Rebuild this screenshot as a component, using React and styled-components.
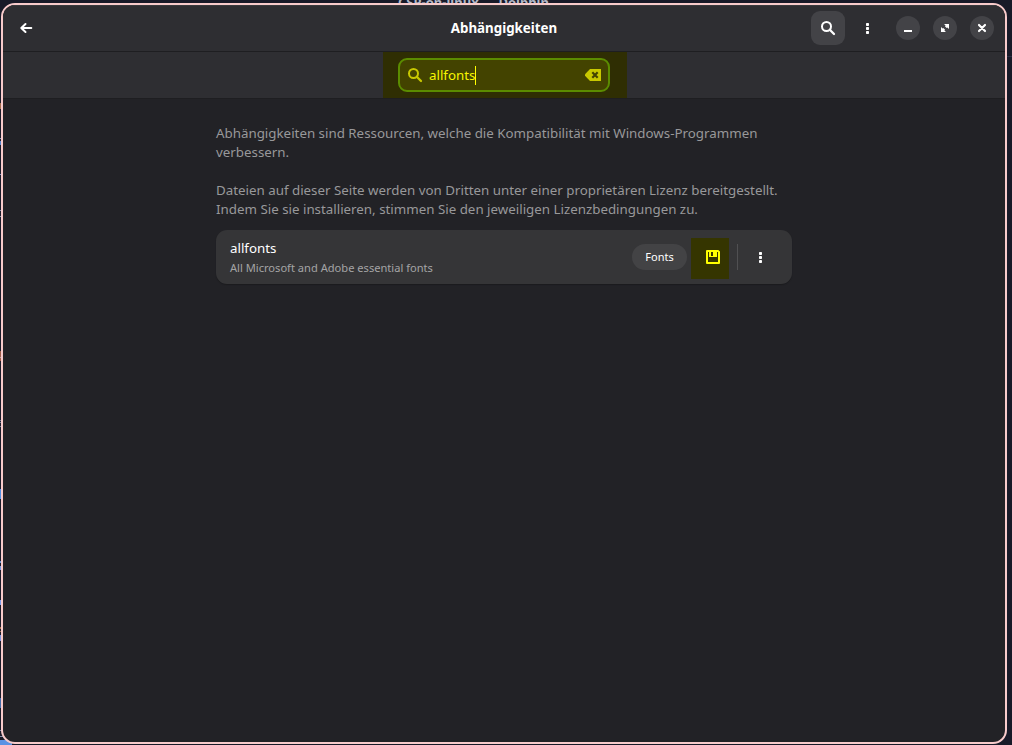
import React from "react";
import styled, { createGlobalStyle } from "styled-components";

const Global = createGlobalStyle`
  * { box-sizing: border-box; }
  body { margin: 0; background: #181a28; overflow: hidden; }
  button { border: 0; padding: 0; font: inherit; color: inherit; background: none; }
  svg { display: block; }
`;

const Desktop = styled.div`
  position: relative;
  width: 1012px;
  height: 745px;
  overflow: hidden;
  padding: 3px 5px 1px 1px;
  background: #181a28;
  font-family: "Noto Sans", sans-serif;
  font-size: 13.33px;
  color: #fff;
`;

/* The window behind: its title, left edge and toolbar line peek out. */
const BackTitle = styled.div`
  position: absolute;
  left: 398px;
  top: -7px;
  font-size: 13px;
  line-height: 18px;
  font-weight: 700;
  color: #b4b9c8;
  white-space: pre;
`;
const BackMark = styled.i`
  position: absolute;
  left: 0;
  top: ${(p) => p.$y}px;
  width: ${(p) => p.$w || 3}px;
  height: ${(p) => p.$h}px;
  background: ${(p) => p.$c};
`;
const BackLine = styled.i`
  position: absolute;
  right: 0;
  top: 56px;
  width: 8px;
  height: 1px;
  background: #2b2e44;
`;

const Window = styled.main`
  position: relative;
  height: 741px;
  border: 2px solid #f8cbcb;
  border-radius: 14px;
  background: #222226;
  overflow: hidden;
`;

const HeaderBar = styled.header`
  display: grid;
  grid-template-columns: 1fr auto 1fr;
  align-items: center;
  height: 47px;
  padding: 0 11px 2px;
  background: #2e2e32;
  border-top: 1px solid #3a3a3e;
  border-bottom: 1px solid #1e1e21;
`;
const Title = styled.h1`
  margin: 0;
  font-size: 13.33px;
  line-height: 18px;
  font-weight: 700;
`;
const Controls = styled.div`
  display: flex;
  align-items: center;
  justify-content: flex-end;
`;
const ToolButton = styled.button`
  display: grid;
  place-items: center;
  width: 34px;
  height: 34px;
  border-radius: 9px;
  background: ${(p) => (p.$active ? "#434347" : "transparent")};
`;
const BackButton = styled(ToolButton)`
  margin-left: -5px;
`;
const MenuButton = styled(ToolButton)`
  margin: 0 12px 0 5px;
`;
const WindowButton = styled.button`
  display: grid;
  place-items: center;
  width: 24px;
  height: 24px;
  border-radius: 50%;
  background: #434347;
  & + & { margin-left: 13px; }
`;

const SearchBar = styled.div`
  display: flex;
  justify-content: center;
  height: 47px;
  padding-left: 2px;
  background: #2e2e32;
  border-bottom: 1px solid #1e1e21;
`;
const SearchMark = styled.div`
  width: 244px;
  height: 46px;
  padding: 6px 16px 0 15px;
  background: #2f2e03;
`;
const Entry = styled.div`
  display: flex;
  align-items: center;
  width: 212px;
  height: 34px;
  padding: 0 7px;
  border: 2px solid #5b8c00;
  border-radius: 9px;
  background: #434300;
  color: #f6f600;
`;
const EntryIcon = styled.span`
  color: #c8c800;
`;
const EntryText = styled.span`
  margin-left: 6px;
  line-height: 18px;
`;
const Caret = styled.span`
  width: 1px;
  height: 19px;
  background: #ffff00;
`;
const ClearButton = styled.button`
  margin-left: auto;
`;

const Page = styled.section`
  width: 576px;
  margin: 0 auto;
  padding-top: 25px;
`;
const Paragraph = styled.p`
  margin: 0 0 19px;
  line-height: 19px;
  color: #98989a;
  white-space: nowrap;
`;
const Row = styled.article`
  display: flex;
  align-items: center;
  height: 54px;
  margin-top: -8px;
  padding: 0 14px;
  border-radius: 11px;
  background: #353537;
  box-shadow: 0 1px 1px #1b1b1e;
`;
const RowText = styled.div`
  flex: 1;
`;
const RowTitle = styled.div`
  padding-top: 1px;
  line-height: 19px;
`;
const RowSubtitle = styled.div`
  margin-top: 1px;
  font-size: 11.11px;
  line-height: 17px;
  color: #a4a4a5;
`;
const Tag = styled.span`
  width: 55px;
  height: 26px;
  border-radius: 13px;
  background: #434345;
  font-size: 11px;
  line-height: 26px;
  text-align: center;
`;
const InstallButton = styled.button`
  display: grid;
  place-items: center;
  width: 38px;
  height: 41px;
  margin: 3px 8px 0 4px;
  padding: 0 0 4px 6px;
  background: #353500;
  color: #ffff00;
`;
const Divider = styled.span`
  width: 1px;
  height: 26px;
  background: #505052;
`;
const RowMenu = styled(ToolButton)`
  margin: 0 1px 0 5px;
`;

const SearchIcon = () => (
  <svg width="16" height="16" viewBox="0 0 16 16" fill="none" stroke="currentColor" strokeWidth="2">
    <circle cx="6.5" cy="6.5" r="4.5" />
    <path d="M9.8 9.8 14 14" strokeWidth="2.3" strokeLinecap="round" />
  </svg>
);
const DotsIcon = () => (
  <svg width="16" height="16" viewBox="0 0 16 16" fill="currentColor">
    <rect x="7" y="3" width="3" height="3" rx="0.8" />
    <rect x="7" y="7" width="3" height="3" rx="0.8" />
    <rect x="7" y="11" width="3" height="3" rx="0.8" />
  </svg>
);
const BackIcon = () => (
  <svg width="16" height="16" viewBox="0 0 16 16" fill="none" stroke="currentColor" strokeWidth="2" strokeLinecap="round" strokeLinejoin="round">
    <path d="M7.5 4 3.300 8l4.200 4M3.500 8H13.300" />
  </svg>
);
const MinimizeIcon = () => (
  <svg width="16" height="16" viewBox="0 0 16 16" fill="currentColor">
    <path d="M4 10h8v2H4z" />
  </svg>
);
const RestoreIcon = () => (
  <svg width="16" height="16" viewBox="0 0 16 16" fill="currentColor">
    <path d="M7 4h5v5l-1.600-1.600-.7.700-1.800-1.800.7-.7z" />
    <path d="M9 12H4V7l1.600 1.600.7-.7 1.800 1.800-.7.700z" />
  </svg>
);
const CloseIcon = () => (
  <svg width="16" height="16" viewBox="0 0 16 16" fill="none" stroke="currentColor" strokeWidth="2.2" strokeLinecap="round">
    <path d="M5 5l6 6M11 5l-6 6" />
  </svg>
);
const ClearIcon = () => (
  <svg width="16" height="16" viewBox="0 0 16 16">
    <path d="M5 2h11v12H5L0 8.700V7.300z" fill="#c8c800" />
    <path d="M7.300 5.300l5.400 5.400M12.700 5.300l-5.400 5.400" stroke="#434300" strokeWidth="2.200" />
  </svg>
);
const SaveIcon = () => (
  <svg width="16" height="16" viewBox="0 0 16 16" fill="none" stroke="currentColor">
    <path d="M2 2h11L14 3v11H2z" strokeWidth="2" strokeLinejoin="round" />
    <path d="M4 2v6h8V2z" fill="currentColor" stroke="none" />
    <path d="M3.500 3v5M12.500 3v5" stroke="#353500" />
    <path d="M7 3v4" stroke="#353500" strokeWidth="2" />
  </svg>
);

const marks = [
  [103, 6, "#a06a4c"], [138, 1, "#8990aa"], [141, 4, "#5684cc"], [174, 1, "#8990c0"],
  [210, 1, "#8990aa"], [216, 1, "#8990aa"], [351, 10, "#9b5a48"], [357, 1, "#b4a0a8"],
  [420, 1, "#737994"], [422, 1, "#737994"], [426, 1, "#737994"], [489, 10, "#4f8de0"],
  [561, 2, "#6590cc"], [566, 4, "#7392da"], [600, 5, "#7a9cec"], [627, 2, "#a06a4c"],
  [631, 1, "#a06a4c"], [635, 6, "#7a90d8"], [698, 10, "#426ba8"], [730, 1, "#8990aa"],
  [736, 1, "#8990aa"], [740, 5, "#5b92e4", 12],
];

export default function App() {
  return (
    <Desktop>
      <Global />
      <BackTitle>CSP-on-linux — Dolphin</BackTitle>
      <BackLine />
      {marks.map(([y, h, c, w]) => (
        <BackMark key={y} $y={y} $h={h} $c={c} $w={w} />
      ))}
      <Window>
        <HeaderBar>
          <BackButton aria-label="Zurück"><BackIcon /></BackButton>
          <Title>Abhängigkeiten</Title>
          <Controls>
            <ToolButton $active aria-label="Suchen"><SearchIcon /></ToolButton>
            <MenuButton aria-label="Menü"><DotsIcon /></MenuButton>
            <WindowButton aria-label="Minimieren"><MinimizeIcon /></WindowButton>
            <WindowButton aria-label="Wiederherstellen"><RestoreIcon /></WindowButton>
            <WindowButton aria-label="Schließen"><CloseIcon /></WindowButton>
          </Controls>
        </HeaderBar>
        <SearchBar>
          <SearchMark>
            <Entry>
              <EntryIcon><SearchIcon /></EntryIcon>
              <EntryText>allfonts</EntryText>
              <Caret />
              <ClearButton aria-label="Leeren"><ClearIcon /></ClearButton>
            </Entry>
          </SearchMark>
        </SearchBar>
        <Page>
          <Paragraph>
            Abhängigkeiten sind Ressourcen, welche die Kompatibilität mit Windows-Programmen
            <br />
            verbessern.
          </Paragraph>
          <Paragraph>
            Dateien auf dieser Seite werden von Dritten unter einer proprietären Lizenz bereitgestellt.
            <br />
            Indem Sie sie installieren, stimmen Sie den jeweiligen Lizenzbedingungen zu.
          </Paragraph>
          <Row>
            <RowText>
              <RowTitle>allfonts</RowTitle>
              <RowSubtitle>All Microsoft and Adobe essential fonts</RowSubtitle>
            </RowText>
            <Tag>Fonts</Tag>
            <InstallButton aria-label="Installieren"><SaveIcon /></InstallButton>
            <Divider />
            <RowMenu aria-label="Mehr"><DotsIcon /></RowMenu>
          </Row>
        </Page>
      </Window>
    </Desktop>
  );
}
